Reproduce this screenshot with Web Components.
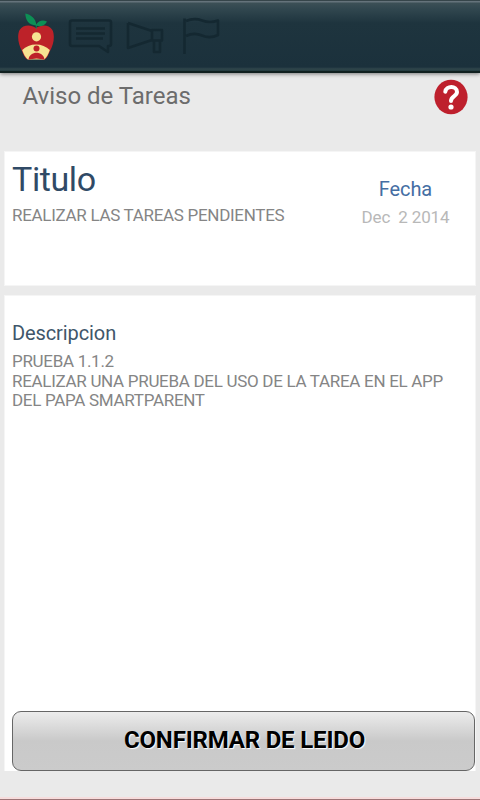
<!DOCTYPE html>
<html lang="es">
<head>
<meta charset="utf-8">
<title>Aviso de Tareas</title>
<style>
  body {
    margin: 0;
    background: #eaeaea;
    font-family: Roboto, "Liberation Sans", sans-serif;
  }
</style>
</head>
<body>
<task-notice></task-notice>

<script>
class BaseElement extends HTMLElement {
  constructor() {
    super();
    this.attachShadow({ mode: 'open' });
  }

  connectedCallback() {
    const template = document.createElement('template');
    template.innerHTML = this.getStyles() + this.getTemplate();
    this.shadowRoot.replaceChildren(template.content.cloneNode(true));
  }
}

class AppBar extends BaseElement {
  getTemplate() {
    return `
    <svg class="logo" width="36" height="48" viewBox="0 0 36 48">
      <path fill="#bd2229" d="M18 15C13 11.500 5 11.500 1.600 17C-1.300 23 .5 32 4 38C6 43.500 8 46.800 11 46.500L18 45.500L25 46.500C28 46.800 29.500 44 32 38C35.500 32 37.300 23 34.400 17C31 11.500 23 11.500 18 15Z"/>
      <path fill="#f6e392" d="M4.200 37C11 29.500 25 29.500 31.800 37C30.300 41.500 28.500 44.500 26.200 46.500H9.800C7.500 44.500 5.700 41.500 4.200 37Z"/>
      <path fill="#bd2229" d="M10.500 46.500C11.500 37.500 25.500 37.500 26.500 46.500L18.500 45.500Z"/>
      <circle cx="18.500" cy="23.800" r="4.600" fill="#f6e392"/>
      <circle cx="18.500" cy="35.500" r="3" fill="#bd2229"/>
      <path fill="#0d8f55" d="M17.800 12.500C10.500 12 7.500 7 7.300.500C13 1.500 17.800 6 18.300 11.500C20.500 7.500 25 6.500 29 8.500C26.500 13 22.500 14 18.600 12.800V16H17.800Z"/>
    </svg>
    <svg class="chat" width="46" height="38" viewBox="0 0 46 38">
      <path d="M4 2.500H41Q43 2.500 43 4.500V26Q43 28 41 28H40V34L31 28H4Q2 28 2 26V4.500Q2 2.500 4 2.500Z"/>
      <path d="M8 10.500H37M8 15.500H37M8 20.500H35"/>
    </svg>
    <svg class="horn" width="38" height="34" viewBox="0 0 38 34">
      <path d="M2 2V27L26 19M2 2L26 10M26 9H36V19.500H26ZM28 19.500V31H34V19.500"/>
    </svg>
    <svg class="flag" width="39" height="40" viewBox="0 0 39 40">
      <path d="M2.500 1.500V37M4 4Q12 .5 20 3.500T36 3.500V18Q28 22 20 18.500T4 19"/>
    </svg>`;
  }

  getStyles() {
    return `
    <style>
      :host {
        display: flex;
        box-sizing: border-box;
        height: 73px;
        padding: 12px 18px 0;
        border-top: 1px solid #36454a;
        border-bottom: 2px solid #10201f;
        background: linear-gradient(#65737b 0, #65737b 1px, #3c5056 2px, #31474f 8px, #1e343e 22px, #1b313c 66px, #30464b 68px, #223a3e 70px);
        box-shadow: 0 1px 4px #777;
      }
      svg { flex: none; fill: none; stroke: #142831; stroke-width: 2.600; stroke-linejoin: round; }
      .logo { margin-left: -0.5px; stroke: none; }
      .chat { margin: 5px 0 0 14px; }
      .horn { margin: 8px 0 0 12px; }
      .flag { margin: 4px 0 0 18px; }
    </style>`;
  }
}
customElements.define('app-bar', AppBar);

class HelpIcon extends BaseElement {
  getTemplate() {
    return `
    <svg width="34" height="36" viewBox="0 0 34 36">
      <ellipse cx="17" cy="18" rx="16.600" ry="17.300" fill="#be202d"/>
      <path fill="none" stroke="#fff" stroke-width="4" stroke-linecap="round" d="M11.300 12.800C12 6.500 23 6.500 23 13C23 17.200 17 17 17 22"/>
      <circle cx="17" cy="28" r="2.600" fill="#fff"/>
    </svg>`;
  }

  getStyles() {
    return `<style>:host { display: block; width: 34px; height: 36px; } svg { display: block; }</style>`;
  }
}
customElements.define('help-icon', HelpIcon);

class PageHeading extends BaseElement {
  getTemplate() {
    return `<h1><slot></slot></h1><help-icon></help-icon>`;
  }

  getStyles() {
    return `
    <style>
      :host {
        display: flex;
        justify-content: space-between;
        box-sizing: border-box;
        height: 78px;
        padding: 6px 12px 0 22.5px;
      }
      h1 {
        margin: 3px 0 0;
        font-size: 24px;
        line-height: 28px;
        font-weight: 400;
        color: #6c6c6c;
      }
    </style>`;
  }
}
customElements.define('page-heading', PageHeading);

class TaskCard extends BaseElement {
  getTemplate() {
    return `<slot></slot>`;
  }

  getStyles() {
    return `
    <style>
      :host {
        display: block;
        box-sizing: border-box;
        padding: 0 0 0 7px;
        background: #fff;
        border: 1px solid #f5f5f5;
      }
    </style>`;
  }
}
customElements.define('task-card', TaskCard);

class TaskField extends BaseElement {
  getTemplate() {
    return `<div class="label"><slot name="label"></slot></div><div class="value"><slot></slot></div>`;
  }

  getStyles() {
    return `
    <style>
      :host { display: block; }
      .label {
        font-size: var(--label-size, 20px);
        line-height: var(--label-line, 24px);
        letter-spacing: var(--label-spacing, -0.1px);
        color: var(--label-color, #40566a);
      }
      .value {
        margin-top: 7px;
        font-size: 17px;
        line-height: 19.5px;
        letter-spacing: var(--value-spacing, -0.3px);
        color: var(--value-color, #858585);
      }
    </style>`;
  }
}
customElements.define('task-field', TaskField);

class ConfirmButton extends BaseElement {
  getTemplate() {
    return `<button><slot></slot></button>`;
  }

  getStyles() {
    return `
    <style>
      :host { display: block; }
      button {
        display: block;
        box-sizing: border-box;
        width: 100%;
        height: 60px;
        padding: 0 0 3px 2px;
        font: 700 24px/28px Roboto, "Liberation Sans", sans-serif;
        letter-spacing: -0.17px;
        color: #000;
        text-shadow: 1px 1px 1px #fff;
        border: 1.500px solid #666;
        border-radius: 9px;
        background: linear-gradient(#ececec, #c9c9c9 50%, #cbcbcb);
      }
    </style>`;
  }
}
customElements.define('confirm-button', ConfirmButton);

class TaskNotice extends BaseElement {
  getTemplate() {
    return `
    <app-bar></app-bar>
    <page-heading>Aviso de Tareas</page-heading>
    <main>
      <task-card class="summary">
        <task-field class="title"><span slot="label">Titulo</span>REALIZAR LAS TAREAS PENDIENTES</task-field>
        <task-field class="date"><span slot="label">Fecha</span>Dec&nbsp; 2 2014</task-field>
      </task-card>
      <task-card class="detail">
        <task-field class="description"><span slot="label">Descripcion</span>PRUEBA 1.1.2<br>REALIZAR UNA PRUEBA DEL USO DE LA TAREA EN EL APP<br>DEL PAPA SMARTPARENT</task-field>
        <confirm-button>CONFIRMAR DE LEIDO</confirm-button>
      </task-card>
    </main>
    <footer></footer>`;
  }

  getStyles() {
    return `
    <style>
      :host {
        display: flex;
        flex-direction: column;
        box-sizing: border-box;
        height: 800px;
      }
      main {
        flex: 1;
        display: flex;
        flex-direction: column;
        gap: 9px;
        padding: 0 4px 26px;
      }
      .summary {
        display: flex;
        justify-content: space-between;
        height: 135px;
      }
      .title {
        margin-top: 7px;
        --label-size: 34px;
        --label-line: 40px;
        --label-spacing: -0.4px;
        --label-color: #304a66;
      }
      .date {
        width: 139px;
        margin-top: 25px;
        text-align: center;
        --label-color: #456ea3;
        --value-color: #b8b8b8;
        --value-spacing: -0.15px;
      }
      .detail {
        flex: 1;
        display: flex;
        flex-direction: column;
        justify-content: space-between;
        padding-right: 0;
        border-bottom: 0;
      }
      .description { margin-top: 25px; }
      footer {
        height: 1px;
        border-top: 2px solid #f6dcdc;
        background: #9c7476;
      }
    </style>`;
  }
}
customElements.define('task-notice', TaskNotice);
</script>
</body>
</html>
